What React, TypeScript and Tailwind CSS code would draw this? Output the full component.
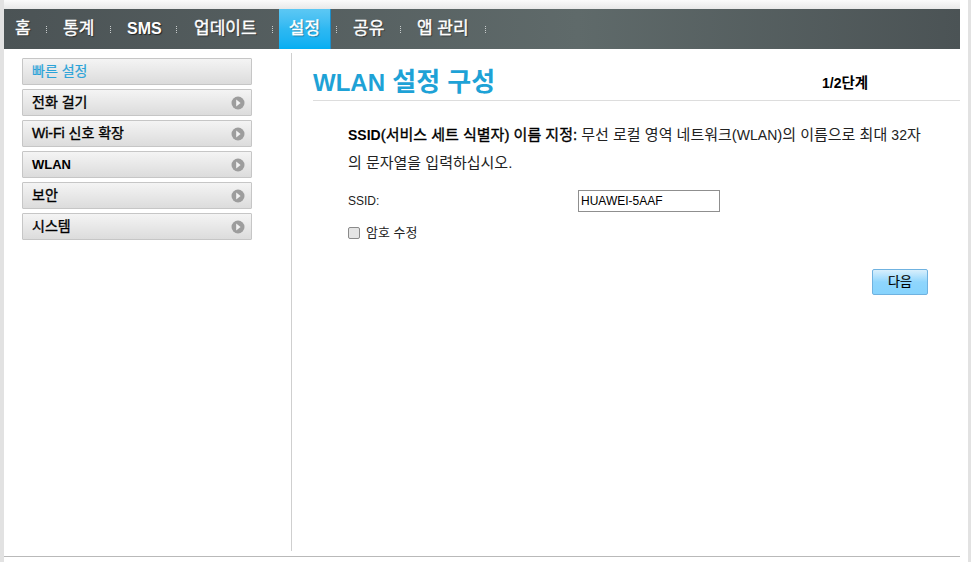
const font = "font-['Liberation_Sans','Noto_Sans_CJK_KR',sans-serif]";

function Sep() {
  return (
    <span className="flex w-[1px] flex-col gap-[1px]">
      <i className="block h-[1px] w-[1px] bg-[#c8cccc]" />
      <i className="block h-[1px] w-[1px] bg-[#c8cccc]" />
      <i className="block h-[1px] w-[1px] bg-[#c8cccc]" />
      <i className="block h-[1px] w-[1px] bg-[#c8cccc]" />
    </span>
  );
}

function NavItem({ label, w, latin }: { label: string; w: string; latin?: boolean }) {
  return (
    <div
      className={`${w} flex h-full items-center text-white [text-shadow:1px_1px_1px_rgba(0,0,0,0.6)] ${
        latin ? "text-[16px] font-bold" : "text-[17px] font-normal [-webkit-text-stroke:0.4px_#fff]"
      }`}
    >
      {label}
    </div>
  );
}

function Arrow() {
  return (
    <svg width="14" height="14" viewBox="0 0 14 14">
      <circle cx="7" cy="7" r="6.5" fill="#9d9d9d" />
      <path d="M5.2 3.6 9.6 7 5.2 10.4Z" fill="#f2f2f2" />
    </svg>
  );
}

function SideItem({ label, latin }: { label: string; latin?: boolean }) {
  return (
    <div className="flex h-[27px] items-center justify-between rounded-[1px] border border-[#c6c6c6] bg-gradient-to-b from-[#f4f4f4] to-[#dcdcdc] pl-[9px] pr-[6px] text-black">
      <span
        className={
          latin ? "text-[13px] font-bold" : "text-[14px] font-normal [-webkit-text-stroke:0.35px_#000]"
        }
      >
        {label}
      </span>
      <Arrow />
    </div>
  );
}

export default function App() {
  return (
    <div className={`${font} flex h-[562px] w-[971px] overflow-hidden bg-white`}>
      <div className="w-[4px] bg-[#e2e2e2]" />
      <div className="flex w-[956px] flex-col">
        <div className="h-[9px] bg-gradient-to-b from-[#fbfbfb] to-[#e8e8e8]" />
        <nav className="flex h-[40px] items-center bg-gradient-to-r from-[#4b5355] via-[#5f6a6a] via-60% to-[#4b5355]">
          <NavItem label="홈" w="w-[42px] pl-[11px]" />
          <Sep />
          <NavItem label="통계" w="w-[63px] pl-[16px]" />
          <Sep />
          <NavItem label="SMS" w="w-[65px] pl-[16px]" latin />
          <Sep />
          <NavItem label="업데이트" w="w-[95px] pl-[17px]" />
          <Sep />
          <div className="ml-[6px] flex h-full w-[52px] items-center justify-center border-r border-[#1c8fcb] bg-gradient-to-b from-[#5cc8f4] via-[#2db8f2] to-[#03aef2] text-[17px] text-white [-webkit-text-stroke:0.4px_#fff] [text-shadow:1px_1px_1px_rgba(0,0,0,0.4)]">
            설정
          </div>
          <div className="w-[5px]" />
          <Sep />
          <NavItem label="공유" w="w-[63px] pl-[16px]" />
          <Sep />
          <NavItem label="앱 관리" w="w-[84px] pl-[16px]" />
          <Sep />
        </nav>
        <div className="flex flex-1">
          <aside className="flex w-[248px] flex-col gap-[4px] pl-[18px] pt-[9px]">
            <div className="flex h-[27px] items-center rounded-[1px] border border-[#c6c6c6] bg-gradient-to-b from-[#f4f4f4] to-[#dcdcdc] pl-[9px] text-[14px] text-[#2ba3d8] [-webkit-text-stroke:0.2px_#2ba3d8]">
              <span>빠른 설정</span>
            </div>
            <SideItem label="전화 걸기" />
            <SideItem label="Wi-Fi 신호 확장" />
            <SideItem label="WLAN" latin />
            <SideItem label="보안" />
            <SideItem label="시스템" />
          </aside>
          <div className="mt-[4px] mb-[5px] ml-[39px] w-[1px] bg-[#cfcfcf]" />
          <main className="ml-[21px] flex-1">
            <div className="mt-[19px] flex h-[33px] items-center border-b border-[#dddddd]">
              <h1 className="w-[509px] pb-[3px] text-[26px] leading-[30px] font-bold text-[#1ea2d6]">
                <span className="text-[24px]">WLAN</span> 설정 구성
              </h1>
              <span className="text-[14.5px] font-bold text-black">
                <span className="text-[14px]">1/2</span>단계
              </span>
            </div>
            <p className="mt-[20px] ml-[35px] w-[584px] text-[15px] leading-[27px] text-[#222]">
              <b className="font-normal text-black [-webkit-text-stroke:0.35px_#000]">
                <span className="text-[14px] font-bold [-webkit-text-stroke:0]">SSID</span>(서비스 세트 식별자) 이름 지정:
              </b>{" "}
              무선 로컬 영역 네트워크(<span className="text-[14px]">WLAN</span>)의 이름으로 최대 <span className="text-[14px]">32</span>자의 문자열을 입력하십시오.
            </p>
            <div className="mt-[14px] ml-[35px] flex h-[22px] items-center text-[12px] text-[#222]">
              <span className="w-[230px]">SSID:</span>
              <input
                readOnly
                value="HUAWEI-5AAF"
                className="h-[22px] w-[142px] border border-[#8f8f8f] px-[2px] text-[12px] text-black outline-none"
              />
            </div>
            <label className="mt-[11px] ml-[35px] flex items-center gap-[6px] text-[13px] text-[#222]">
              <input
                type="checkbox"
                className="m-0 h-[12px] w-[12px] appearance-none rounded-[2px] border border-[#8a8a8a] bg-[#e4e4e4]"
              />
              암호 수정
            </label>
            <div className="mt-[26px] flex justify-end pr-[32px]">
              <button className="h-[26px] w-[56px] rounded-[2px] border border-[#6fb2e0] bg-gradient-to-b from-[#d8effc] via-[#8fd6fd] to-[#86d3fd] text-[13px] text-black [-webkit-text-stroke:0.2px_#000]">
                다음
              </button>
            </div>
          </main>
        </div>
        <div className="mb-[5px] h-[1px] bg-[#b9b9b9]" />
      </div>
      <div className="w-[8px]" />
      <div className="w-[3px] bg-[#e2e2e2]" />
    </div>
  );
}
